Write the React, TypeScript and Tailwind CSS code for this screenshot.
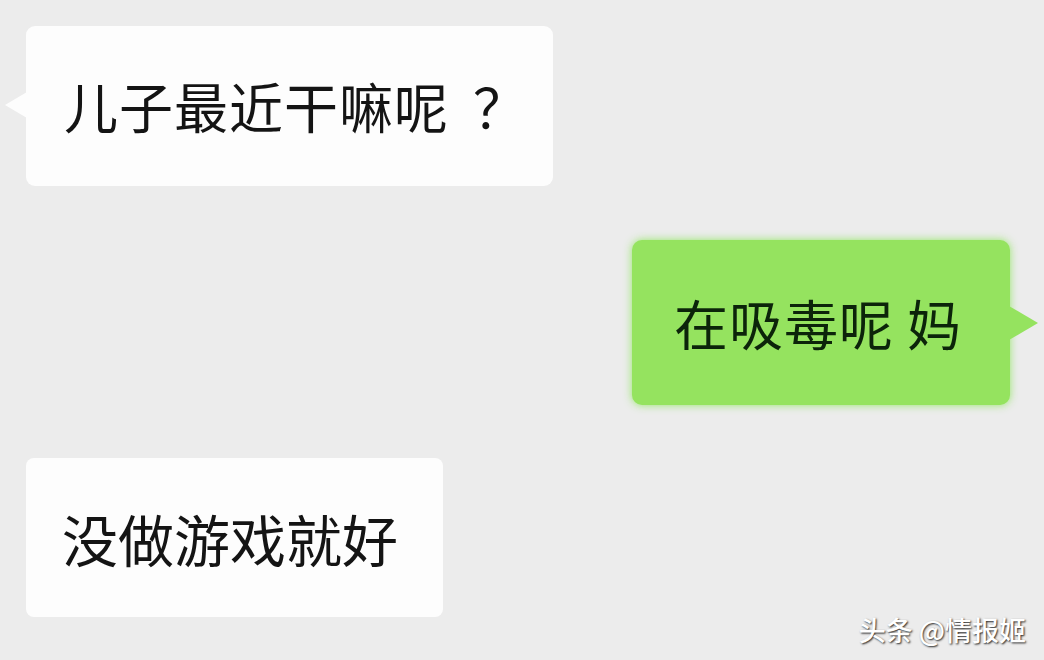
import React from 'react';

const font = { fontFamily: '"Noto Sans CJK SC", "Noto Sans", sans-serif' };

export default function App() {
  return (
    <div
      className="relative w-[1044px] h-[660px] overflow-hidden bg-[#ececec] flex flex-col pt-[26px] pl-[26px] pr-[34px]"
      style={font}
    >
      {/* 左边消息 */}
      <div className="relative self-start w-[527px] h-[160px] rounded-[9px] bg-[#fdfdfd] flex items-center pl-[38px]">
        <span className="absolute left-[-21px] top-[66px] w-0 h-0 border-y-[13px] border-y-transparent border-r-[22px] border-r-[#fdfdfd]" />
        <span className="text-[54px] leading-none text-[#141414] tracking-[1px]">儿子最近干嘛呢</span>
        <span className="ml-[24px] text-[54px] leading-none text-[#141414]">？</span>
      </div>

      {/* 右边消息 */}
      <div className="relative self-end mt-[54px] w-[378px] h-[165px] rounded-[10px] bg-[#95e35f] shadow-[0_0_8px_rgba(140,230,90,0.9)] flex items-center pl-[42px]">
        <span className="absolute right-[-28px] top-[66px] w-0 h-0 border-y-[17px] border-y-transparent border-l-[29px] border-l-[#95e35f]" />
        <span className="text-[54px] leading-none text-[#0c240a] tracking-[1px]">在吸毒呢 妈</span>
      </div>

      {/* 左边消息 */}
      <div className="self-start mt-[53px] w-[417px] h-[159px] rounded-[8px] bg-[#fdfdfd] flex items-center pl-[36px]">
        <span className="text-[56px] leading-none text-[#141414]">没做游戏就好</span>
      </div>

      <div className="absolute right-[18px] bottom-[17px] text-[27px] font-medium leading-none text-white [text-shadow:1px_1px_2px_rgba(0,0,0,0.85)]">
        头条 @情报姬
      </div>
    </div>
  );
}
